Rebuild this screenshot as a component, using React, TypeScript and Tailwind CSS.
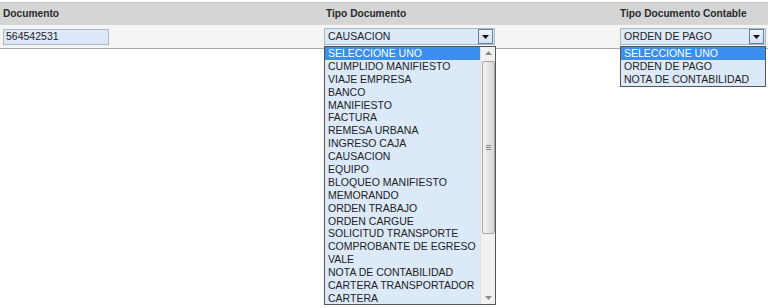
const tipos = [
  "SELECCIONE UNO",
  "CUMPLIDO MANIFIESTO",
  "VIAJE EMPRESA",
  "BANCO",
  "MANIFIESTO",
  "FACTURA",
  "REMESA URBANA",
  "INGRESO CAJA",
  "CAUSACION",
  "EQUIPO",
  "BLOQUEO MANIFIESTO",
  "MEMORANDO",
  "ORDEN TRABAJO",
  "ORDEN CARGUE",
  "SOLICITUD TRANSPORTE",
  "COMPROBANTE DE EGRESO",
  "VALE",
  "NOTA DE CONTABILIDAD",
  "CARTERA TRANSPORTADOR",
  "CARTERA",
];

const contables = ["SELECCIONE UNO", "ORDEN DE PAGO", "NOTA DE CONTABILIDAD"];

function Arrow() {
  return (
    <div className="flex h-[15px] w-[15px] items-center justify-center border border-[#5f7f9c] bg-gradient-to-b from-[#eef4fb] to-[#d3e1f0]">
      <svg width="7" height="4" viewBox="0 0 7 4">
        <path d="M0 0h7L3.5 4z" fill="#111" />
      </svg>
    </div>
  );
}

function Select({ value, width }: { value: string; width: string }) {
  return (
    <div
      className={`flex h-[17px] items-center justify-between border border-[#a9b7c6] bg-[#dce9f9] pl-[3px] pr-px ${width}`}
    >
      <span className="text-[#222]">{value}</span>
      <Arrow />
    </div>
  );
}

function Option({ label, active }: { label: string; active?: boolean }) {
  return (
    <div
      className={`h-[12.9px] whitespace-nowrap pl-[3px] leading-[12.9px] ${
        active ? "bg-[#3a8ff0] text-white" : "text-[#222]"
      }`}
    >
      {label}
    </div>
  );
}

export default function App() {
  return (
    <div className="h-[308px] w-[768px] overflow-hidden bg-white pt-[2px] text-[10.5px] font-['Liberation_Sans',Arial,sans-serif] text-[#222]">
      <div className="grid h-[23px] grid-cols-[321px_296px_1fr] items-center border-t border-[#c2c2c2] bg-[#d5d5d5] text-[10.2px] font-bold text-[#2a2a2a]">
        <div className="pl-[3px]">Documento</div>
        <div className="pl-[5px]">Tipo Documento</div>
        <div className="pl-[3px]">Tipo Documento Contable</div>
      </div>
      <div className="grid h-[24px] grid-cols-[321px_296px_1fr] items-center border-b border-[#a9a9a9] bg-[#f5f5f5]">
        <div className="pl-[3px]">
          <div className="flex h-[16px] w-[106px] items-center border border-[#a9b7c6] bg-[#dde9fa] pl-[2px]">
            564542531
          </div>
        </div>
        <div className="relative pl-[3px]">
          <Select value="CAUSACION" width="w-[171px]" />
          <div className="absolute left-[3px] top-[18px] z-10 flex h-[259px] w-[172px] overflow-hidden border border-[#555] bg-[#dce9f9]">
            <div className="flex-1 overflow-hidden">
              {tipos.map((t, i) => (
                <Option key={t} label={t} active={i === 0} />
              ))}
            </div>
            <div className="flex w-[15px] flex-col items-center border-l border-[#e2e2e2] bg-[#f1f1f1]">
              <svg className="mt-[4px]" width="7" height="4" viewBox="0 0 7 4">
                <path d="M3.5 0L7 4H0z" fill="#8a8a8a" />
              </svg>
              <div className="mt-[6px] flex h-[173px] w-[13px] items-center justify-center rounded-[2px] border border-[#a7a7a7] bg-gradient-to-r from-[#f2f2f2] to-[#d6d6d6]">
                <svg width="5" height="5" viewBox="0 0 5 5">
                  <path d="M0 .5h5M0 2.5h5M0 4.5h5" stroke="#8a8a8a" strokeWidth="1" />
                </svg>
              </div>
              <div className="flex-1" />
              <svg className="mb-[4px]" width="7" height="4" viewBox="0 0 7 4">
                <path d="M0 0h7L3.5 4z" fill="#8a8a8a" />
              </svg>
            </div>
          </div>
        </div>
        <div className="relative pl-[3px]">
          <Select value="ORDEN DE PAGO" width="w-[146px]" />
          <div className="absolute left-[3px] top-[18px] z-10 w-[146px] border border-[#555] bg-[#dce9f9]">
            {contables.map((t, i) => (
              <Option key={t} label={t} active={i === 0} />
            ))}
          </div>
        </div>
      </div>
    </div>
  );
}
